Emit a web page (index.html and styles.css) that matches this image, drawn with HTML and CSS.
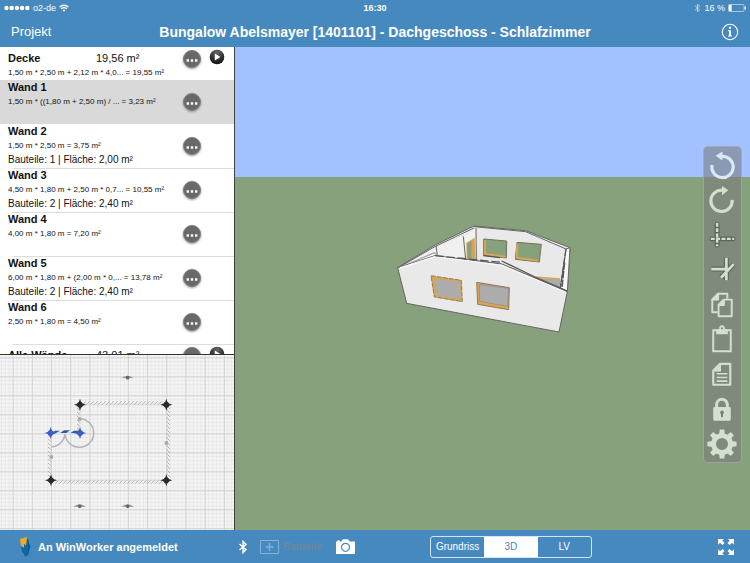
FILE: index.html
```html
<!DOCTYPE html>
<html lang="de">
<head>
<meta charset="utf-8">
<meta name="viewport" content="width=device-width, initial-scale=1">
<title>Bungalow Abelsmayer</title>
<link rel="stylesheet" href="styles.css">
</head>
<body>
<svg class="sprite" aria-hidden="true">
  <defs>
    <radialGradient id="playFill" cx=".5" cy=".2" r=".8"><stop offset="0" stop-color="#666"/><stop offset="1" stop-color="#111"/></radialGradient>
    <symbol id="more" viewBox="0 0 20 20"><circle cx="10" cy="10" r="8.5" fill="#686868" stroke="#808080"/><path d="M4.6 10.3h2.4v2.4H4.6zM8.8 10.3h2.4v2.4H8.8zM13 10.3h2.4v2.4H13z" fill="#fff"/></symbol>
    <symbol id="play" viewBox="0 0 16 16"><circle cx="8" cy="8" r="7.3" fill="url(#playFill)"/><path d="M5.8 4.6 11.4 8l-5.6 3.5z" fill="#fff"/></symbol>
    <symbol id="bluetooth" viewBox="0 0 10 14"><path d="M1.5 4 8 9.6 5 12.6V1.4l3 3L1.5 10" fill="none" stroke="currentColor" stroke-width="1.4"/></symbol>
  </defs>
</svg>

<div class="app">
  <header class="top">
    <div class="status">
      <div class="carrier">
        <svg width="26" height="8" viewBox="0 0 26 8" fill="#fff" aria-hidden="true"><circle cx="2.5" cy="4" r="2.2"/><circle cx="7.7" cy="4" r="2.2"/><circle cx="12.9" cy="4" r="2.2"/><circle cx="18.1" cy="4" r="2.2"/><circle cx="23.3" cy="4" r="2.2"/></svg>
        <span>o2-de</span>
        <svg width="10" height="8" viewBox="0 0 10 8" fill="none" stroke="#fff" stroke-width="1.3" aria-hidden="true"><path d="M.6 3.1a6.2 6.2 0 0 1 8.8 0M2.2 4.9a4 4 0 0 1 5.6 0"/><path d="M3.6 6.1a2 2 0 0 1 2.8 0L5 7.7z" fill="#fff" stroke="none"/></svg>
      </div>
      <time class="clock">16:30</time>
      <div class="battery">
        <svg class="dim" width="7" height="10"><use href="#bluetooth"/></svg>
        <span>16 %</span>
        <svg width="18" height="8" viewBox="0 0 18 8" aria-hidden="true"><rect x=".5" y=".5" width="15.5" height="7" rx="1" fill="none" stroke="#c5dbea" stroke-width=".8"/><path d="M1 1h2.6v6H1zM16.6 2.5h1.2v3h-1.2z" fill="#fff"/></svg>
      </div>
    </div>
    <nav class="nav">
      <button class="back" type="button">Projekt</button>
      <h1>Bungalow Abelsmayer [1401101] - Dachgeschoss - Schlafzimmer</h1>
      <button class="info" type="button" aria-label="Info">
        <svg width="18" height="18" viewBox="0 0 18 18"><circle cx="9" cy="9" r="7.7" fill="none" stroke="#fff" stroke-width="1.1"/><path d="M8 3.8h2v2H8zM7 7.3h3v5.2h1v1H7v-1h1V8.3H7z" fill="#fff"/></svg>
      </button>
    </nav>
  </header>

  <main class="work">
    <aside class="side">
      <ul class="list">
        <li class="row total">
          <div class="text"><div class="head"><b>Decke</b><span>19,56 m²</span></div><div class="formula">1,50 m * 2,50 m + 2,12 m * 4,0... = 19,55 m²</div></div>
          <button type="button" class="more" aria-label="Mehr"><svg width="20" height="20"><use href="#more"/></svg></button>
          <button type="button" class="play" aria-label="Start"><svg width="16" height="16"><use href="#play"/></svg></button>
        </li>
        <li class="row selected">
          <div class="text"><b>Wand 1</b><div class="formula">1,50 m * ((1,80 m + 2,50 m) / ... = 3,23 m²</div></div>
          <button type="button" class="more" aria-label="Mehr"><svg width="20" height="20"><use href="#more"/></svg></button>
        </li>
        <li class="row">
          <div class="text"><b>Wand 2</b><div class="formula">1,50 m * 2,50 m = 3,75 m²</div><div class="parts">Bauteile: 1 | Fläche: 2,00 m²</div></div>
          <button type="button" class="more" aria-label="Mehr"><svg width="20" height="20"><use href="#more"/></svg></button>
        </li>
        <li class="row">
          <div class="text"><b>Wand 3</b><div class="formula">4,50 m * 1,80 m + 2,50 m * 0,7... = 10,55 m²</div><div class="parts">Bauteile: 2 | Fläche: 2,40 m²</div></div>
          <button type="button" class="more" aria-label="Mehr"><svg width="20" height="20"><use href="#more"/></svg></button>
        </li>
        <li class="row">
          <div class="text"><b>Wand 4</b><div class="formula">4,00 m * 1,80 m = 7,20 m²</div></div>
          <button type="button" class="more" aria-label="Mehr"><svg width="20" height="20"><use href="#more"/></svg></button>
        </li>
        <li class="row">
          <div class="text"><b>Wand 5</b><div class="formula">6,00 m * 1,80 m + (2,00 m * 0,... = 13,78 m²</div><div class="parts">Bauteile: 2 | Fläche: 2,40 m²</div></div>
          <button type="button" class="more" aria-label="Mehr"><svg width="20" height="20"><use href="#more"/></svg></button>
        </li>
        <li class="row">
          <div class="text"><b>Wand 6</b><div class="formula">2,50 m * 1,80 m = 4,50 m²</div></div>
          <button type="button" class="more" aria-label="Mehr"><svg width="20" height="20"><use href="#more"/></svg></button>
        </li>
        <li class="row total">
          <div class="text"><div class="head"><b>Alle Wände</b><span>43,01 m²</span></div></div>
          <button type="button" class="more" aria-label="Mehr"><svg width="20" height="20"><use href="#more"/></svg></button>
          <button type="button" class="play" aria-label="Start"><svg width="16" height="16"><use href="#play"/></svg></button>
        </li>
      </ul>
      <div class="plan">
        <svg viewBox="0 0 702 525" preserveAspectRatio="xMinYMin slice" role="img" aria-label="Grundriss">
          <defs>
            <pattern id="minor" x="38" y="7" width="11.5" height="11.4" patternUnits="userSpaceOnUse"><path d="M0 0H11.5M0 0V11.4" stroke="#e0e0e0" stroke-width="3"/></pattern>
            <pattern id="major" x="38" y="7" width="57.6" height="57" patternUnits="userSpaceOnUse"><path d="M0 1.5H57.6M1.5 0V57" stroke="#d2d2d2" stroke-width="3"/></pattern>
            <pattern id="hatch" width="12" height="12" patternUnits="userSpaceOnUse"><path d="M0 12 11 0" stroke="#999" stroke-width="2.2"/></pattern>
            <pattern id="hatchV" width="12" height="12" patternUnits="userSpaceOnUse"><path d="M0 0 12 11" stroke="#999" stroke-width="2.2"/></pattern>
            <path id="node" d="M0-18 3-9 9-3 18 0 9 3 3 9 0 18-3 9-9 3-18 0-9-3-3-9z"/>
            <g id="opening"><path d="M-19 2Q-10-6 0-6 10-6 19 2L7 1H-7z" fill="#999"/><circle r="5.5" fill="#666"/></g>
          </defs>
          <rect width="702" height="525" fill="#f4f4f4"/>
          <rect width="702" height="525" fill="url(#minor)"/>
          <rect width="702" height="525" fill="url(#major)"/>
          <path fill="url(#hatch)" d="M245 139H500v12H245zM154 374H500v12H154z"/>
          <path fill="url(#hatchV)" d="M231 150h10v82h-10zM144 236h10v138h-10zM499 150h11v222h-11z"/>
          <path d="M240 149H500V376H153V235M240 149v85" fill="none" stroke="#d0d0d0" stroke-width="1.5"/>
          <path d="M154 276A43 43 0 0 0 195 235M238 191A43 43 0 1 1 195 235" fill="none" stroke="#b3b3b3" stroke-width="4.5"/>
          <path d="M153 234H240" stroke="#d9e2f2" stroke-width="8"/>
          <path d="M153 236 165 227H180L168 234zM181 234 192 226H210L199 234zM211 234 222 227H240V235z" fill="#315a9c"/>
          <g fill="#aaa"><path d="M234 187h10v10h-10zM149 301h10v10h-10zM494 259h10v10h-10z"/></g>
          <g fill="#292929"><use href="#node" x="240" y="149"/><use href="#node" x="499" y="149"/><use href="#node" x="153" y="376"/><use href="#node" x="499" y="376"/><circle cx="240" cy="149" r="8"/><circle cx="499" cy="149" r="8"/><circle cx="153" cy="376" r="8"/><circle cx="499" cy="376" r="8"/></g>
          <g fill="#3d5cc9"><use href="#node" x="152" y="234"/><use href="#node" x="240" y="234"/><circle cx="152" cy="234" r="8"/><circle cx="240" cy="234" r="8"/></g>
          <use href="#opening" x="383" y="68"/><use href="#opening" x="239" y="454"/><use href="#opening" x="383" y="454"/>
        </svg>
      </div>
    </aside>

    <section class="scene" aria-label="3D">
      <svg class="house" viewBox="0 0 1545 1449" preserveAspectRatio="xMidYMid slice" role="img" aria-label="Schlafzimmer 3D">
        <g transform="translate(435 489)" stroke-linejoin="round">
          <path d="M53 173 165 105 282 48 437 62 570 113 562 245 365 162 165 137z" fill="#e9e9e9" stroke="#666" stroke-width="3"/>
          <path d="M66 169 168 112 250 79 288 56 288 153 165 137z" fill="#f0f0f0"/>
          <path d="M60 170 168 108 282 54M168 108 172 135M250 79 257 148M288 54 289 152M282 50 437 65 558 117" fill="none" stroke="#666" stroke-width="3"/>
          <path d="M75 166 163 128 172 135" fill="none" stroke="#aaa" stroke-width="4"/>
          <path d="M259 98 284 83 287 151 260 147z" fill="#d6a457"/>
          <path d="M262 101 275 93 274 149 262 147z" fill="#87a17d"/>
          <path d="M311 87 380 93 379 144 311 136zM411 97 484 103 478 156 406 148z" fill="#87a17d" stroke="#77715f" stroke-width="3"/>
          <path d="M315 90 315 132 376 140M412 101 410 143 475 152" fill="none" stroke="#d9a552" stroke-width="6"/>
          <path d="M467 203 540 208 544 235z" fill="#aaa"/>
          <path d="M465 201 540 207" stroke="#d9a552" stroke-width="4"/>
          <path d="M558 117 570 113 562 245 541 234z" fill="#fafafa" stroke="#666" stroke-width="3"/>
          <path d="M558 117 541 234M554 157 546 236" fill="none" stroke="#555" stroke-width="4" stroke-dasharray="22 4"/>
          <path d="M53 173 165 137 365 162 562 245 537 366 80 280z" fill="#e9e9e9" stroke="#666" stroke-width="3"/>
          <path d="M60 174 165 140 365 166 555 246" fill="none" stroke="#f6f6f6" stroke-width="4"/>
          <path d="M165 137 365 157" stroke="#555" stroke-width="4" stroke-dasharray="26 8" fill="none"/>
          <path d="M310 137 360 143M365 153 465 201 562 243" stroke="#555" stroke-width="4" fill="none"/>
          <path d="M153 197 244 211 247 275 163 261z" fill="#d9a552" stroke="#7d6c4c" stroke-width="2.5" stroke-dasharray="15 3"/>
          <path d="M167 207 240 215 242 267 170 257z" fill="#acacac"/>
          <path d="M290 217 388 233 386 299 293 283z" fill="#d9a552" stroke="#7d6c4c" stroke-width="2.5"/>
          <path d="M298 223 386 235 383 289 299 274z" fill="#acacac" stroke="#888" stroke-width="2"/>
        </g>
      </svg>
      <div class="tools" role="toolbar">
        <button type="button" aria-label="Rückgängig"><svg viewBox="0 0 36 36"><path d="M7.700 18.500A11 11 0 1 0 18 9.500H14" fill="none" stroke="currentColor" stroke-width="3.200"/><path d="M11.500 9 18.500 4.500V14z"/></svg></button>
        <button type="button" aria-label="Wiederholen"><svg viewBox="0 0 36 36"><path d="M28.500 18.500A11 11 0 1 1 19 8.500H22" fill="none" stroke="currentColor" stroke-width="3.200"/><path d="M24.500 8.500 18 4v9.500z"/></svg></button>
        <button type="button" aria-label="Hilfslinie"><svg viewBox="0 0 36 36" fill="none"><path d="M13 7v22M7.500 22.500h22" stroke="#5b675a" stroke-width="5" stroke-linecap="round"/><path d="M13 6v24M6.500 22.500h24" stroke="currentColor" stroke-width="2.500" stroke-dasharray="4 1.500"/></svg></button>
        <button type="button" aria-label="Trimmen"><svg viewBox="0 0 36 36" fill="none"><path d="M22.500 6v23M7 17.500h17M17 26.500 30 12.500" stroke="#5b675a" stroke-width="5"/><path d="M22.500 6v23M7 17.500h17M17 26.500 30 12.500" stroke="currentColor" stroke-width="2.800"/></svg></button>
        <button type="button" aria-label="Kopieren"><svg viewBox="0 0 36 36" fill="none" stroke="currentColor" stroke-width="2" stroke-linejoin="round"><path d="M13.500 26H8V13l6-6h9.500v5"/><path d="M8 13h6V7z" fill="currentColor"/><path d="M14.500 18.500l5.500-5.500h8v17H14.500z"/><path d="M14.500 18.500H20V13z" fill="currentColor"/></svg></button>
        <button type="button" aria-label="Einfügen"><svg viewBox="0 0 36 36"><path d="M9 8.500h18v21.500H9z" fill="none" stroke="currentColor" stroke-width="2"/><path d="M12 12.500V7.500h3.200a3 3 0 1 1 5.600 0H24v5z"/><circle cx="18" cy="6.500" r="1" fill="#6f806b"/></svg></button>
        <button type="button" aria-label="Dokument"><svg viewBox="0 0 36 36"><path d="M9 14l7-7h10.500v21.500H9z" fill="none" stroke="currentColor" stroke-width="2.200" stroke-linejoin="round"/><path d="M9 15l8-8v8zM12.500 16.500h11v1.600h-11zM12.500 20.200h11v1.600h-11zM12.500 24h11v1.600h-11z"/></svg></button>
        <button type="button" aria-label="Sperren"><svg viewBox="0 0 36 36"><path d="M12.500 17v-4a5.500 5.500 0 0 1 11 0v4" fill="none" stroke="currentColor" stroke-width="3"/><rect x="9" y="15.500" width="18" height="14" rx="1.500"/><path d="M18 19a2 2 0 0 1 1 3.700V26h-2v-3.300A2 2 0 0 1 18 19z" fill="#758371"/></svg></button>
        <button type="button" aria-label="Einstellungen"><svg viewBox="0 0 36 36"><circle cx="18" cy="17.500" r="8.700" fill="none" stroke="currentColor" stroke-width="5"/><g id="teeth"><path d="M15 8 15.700 2.500h4.600L21 8zM15 27l.7 5.500h4.600L21 27zM8.500 14.500l-5.500.7v4.600l5.500.7zM27.500 14.500l5.500.7v4.600l-5.500.7z"/></g><use href="#teeth" transform="rotate(45 18 17.500)"/></svg></button>
      </div>
    </section>
  </main>

  <footer class="bottom">
    <div class="login">
      <svg width="14" height="20" viewBox="0 0 14 20" aria-hidden="true"><path d="M1 2 8 0v9L5 7v4L2 9z" fill="#f2a91e"/><path d="M2 9l3 2V7l2 2 1-8 2 3-1 14-3 2-1-3-2-2z" fill="#11669f"/><path d="M9 5l2 3 1 5-3 6z" fill="#0a568c"/><path d="M11 10l2-2-1 7-3 3z" fill="#2b8fc9"/></svg>
      <strong>An WinWorker angemeldet</strong>
    </div>
    <div class="actions">
      <button type="button" aria-label="Bluetooth"><svg width="10" height="14"><use href="#bluetooth"/></svg></button>
      <button type="button" class="add" disabled><svg width="19" height="14" viewBox="0 0 19 14" fill="none" stroke="#83b2d9"><path d="M.5.5h18v13H.5z"/><path d="M9.500 3v8M5.500 7h8" stroke-width="1.500"/></svg><span>Bauteile</span></button>
      <button type="button" aria-label="Kamera"><svg width="19" height="15" viewBox="0 0 19 15"><path d="M0 2.500h1.500V1.300h2.200v1.200h1.600L7 .3h5l1.700 2.200H19V15H0z" fill="#fff"/><circle cx="9.500" cy="8.300" r="4" fill="none" stroke="#4689bf" stroke-width="1.200"/></svg></button>
      <div class="segments" role="group" aria-label="Ansicht">
        <button type="button">Grundriss</button><button type="button" class="active" aria-pressed="true">3D</button><button type="button">LV</button>
      </div>
      <button type="button" class="expand" aria-label="Vollbild"><svg width="16" height="16" viewBox="0 0 16 16" fill="#fff"><g id="corner"><path d="M0 0h6L4.300 1.700 6.500 4 4.500 6 2 3.800 0 5.800z"/></g><use href="#corner" transform="matrix(-1 0 0 1 16 0)"/><use href="#corner" transform="matrix(1 0 0 -1 0 16)"/><use href="#corner" transform="matrix(-1 0 0 -1 16 16)"/></svg></button>
    </div>
  </footer>
</div>
</body>
</html>
```

FILE: styles.css
```css
:root {
  --blue: #4689bf;
  --side: 235px;
}

* { box-sizing: border-box; }

body {
  margin: 0;
  font-family: "Liberation Sans", Arial, sans-serif;
  color: #111;
}

button {
  margin: 0;
  padding: 0;
  border: 0;
  background: none;
  color: inherit;
  font: inherit;
}

svg { display: block; }
.sprite { position: absolute; width: 0; height: 0; }

.app {
  display: grid;
  grid-template-rows: auto minmax(0, 1fr) auto;
  height: 100vh;
}

.top, .bottom { background: var(--blue); color: #fff; }

.status {
  display: grid;
  grid-template-columns: 1fr auto 1fr;
  align-items: center;
  height: 16px;
  padding: 0 4px;
  font-size: 9px;
  line-height: 16px;
}
.carrier, .battery { display: flex; align-items: center; gap: 3px; }
.battery { justify-content: flex-end; }
.clock { font-weight: bold; }
.dim { opacity: .6; }

.nav {
  display: grid;
  grid-template-columns: 1fr auto 1fr;
  align-items: center;
  height: 31px;
  padding: 0 11px;
  font-size: 13px;
}
.nav h1 { margin: 0; font-size: 14px; white-space: nowrap; }
.back { justify-self: start; }
.info { justify-self: end; }

.work {
  display: grid;
  grid-template-columns: var(--side) minmax(0, 1fr);
  min-height: 0;
}

.side {
  display: grid;
  grid-template-rows: minmax(0, 7fr) minmax(0, 4fr);
  min-height: 0;
  border-right: 1px solid #3b4540;
  background: #fff;
}

.list {
  margin: 0;
  padding: 0;
  list-style: none;
  overflow: hidden auto;
  scrollbar-width: none;
}

.row {
  display: grid;
  grid-template-columns: minmax(0, 1fr) 20px 16px;
  column-gap: 7px;
  align-items: center;
  height: 44px;
  padding: 0 9px 0 8px;
  background: linear-gradient(#ddd, #ddd) 12px 0 / 100% 1px no-repeat;
  font-size: 11px;
  line-height: 14px;
  white-space: nowrap;
}
.text { align-self: start; }
.row.total { height: 33px; align-items: start; padding-top: 4px; }
.row.selected { background: #d9d9d9; }
.row:first-child, .selected + .row { background: none; }
.total button { margin-top: -2px; }
.head { display: flex; }
.head b { flex: 0 0 88px; }
.formula { font-size: 8px; line-height: 15px; }
.parts { font-size: 10px; }
.more svg { filter: drop-shadow(0 1px 1px #999); }

.plan { min-height: 0; border-top: 1px solid #333; overflow: hidden; }
.plan svg { width: 100%; height: 100%; }

.scene {
  position: relative;
  min-height: 0;
  background: linear-gradient(#a3c1ff 27%, #87a17d 27%);
}
.house { width: 100%; height: 100%; }

.tools {
  position: absolute;
  top: 99px;
  right: 8px;
  display: flex;
  flex-direction: column;
  border: 1px solid rgba(175, 180, 180, .6);
  border-radius: 5px;
  background: rgba(120, 120, 120, .55);
  color: #d3dfd0;
}
.tools button { width: 37px; height: 35px; }
.tools svg { width: 36px; height: 35px; fill: currentColor; }
.tools svg[fill="none"] { fill: none; }
.tools button:first-child { color: #dce7fa; }

.bottom {
  display: grid;
  grid-template-columns: var(--side) minmax(0, 1fr);
  height: 33px;
}
.login {
  display: flex;
  align-items: center;
  gap: 5px;
  padding-left: 19px;
  font-size: 11px;
}
.actions {
  display: flex;
  align-items: center;
  padding: 0 16px 0 3px;
  font-size: 10px;
}
.add {
  display: flex;
  align-items: center;
  gap: 4px;
  margin: 0 14px 0 12px;
  color: #6c87a0;
  font-weight: bold;
}
.segments {
  display: grid;
  grid-template-columns: repeat(3, 1fr);
  width: 162px;
  height: 22px;
  margin-left: 75px;
  border: 1px solid #d5e5f2;
  border-radius: 3px;
  line-height: 20px;
  overflow: hidden;
}
.segments .active { background: #fff; color: var(--blue); }
.expand { margin-left: auto; }
```
